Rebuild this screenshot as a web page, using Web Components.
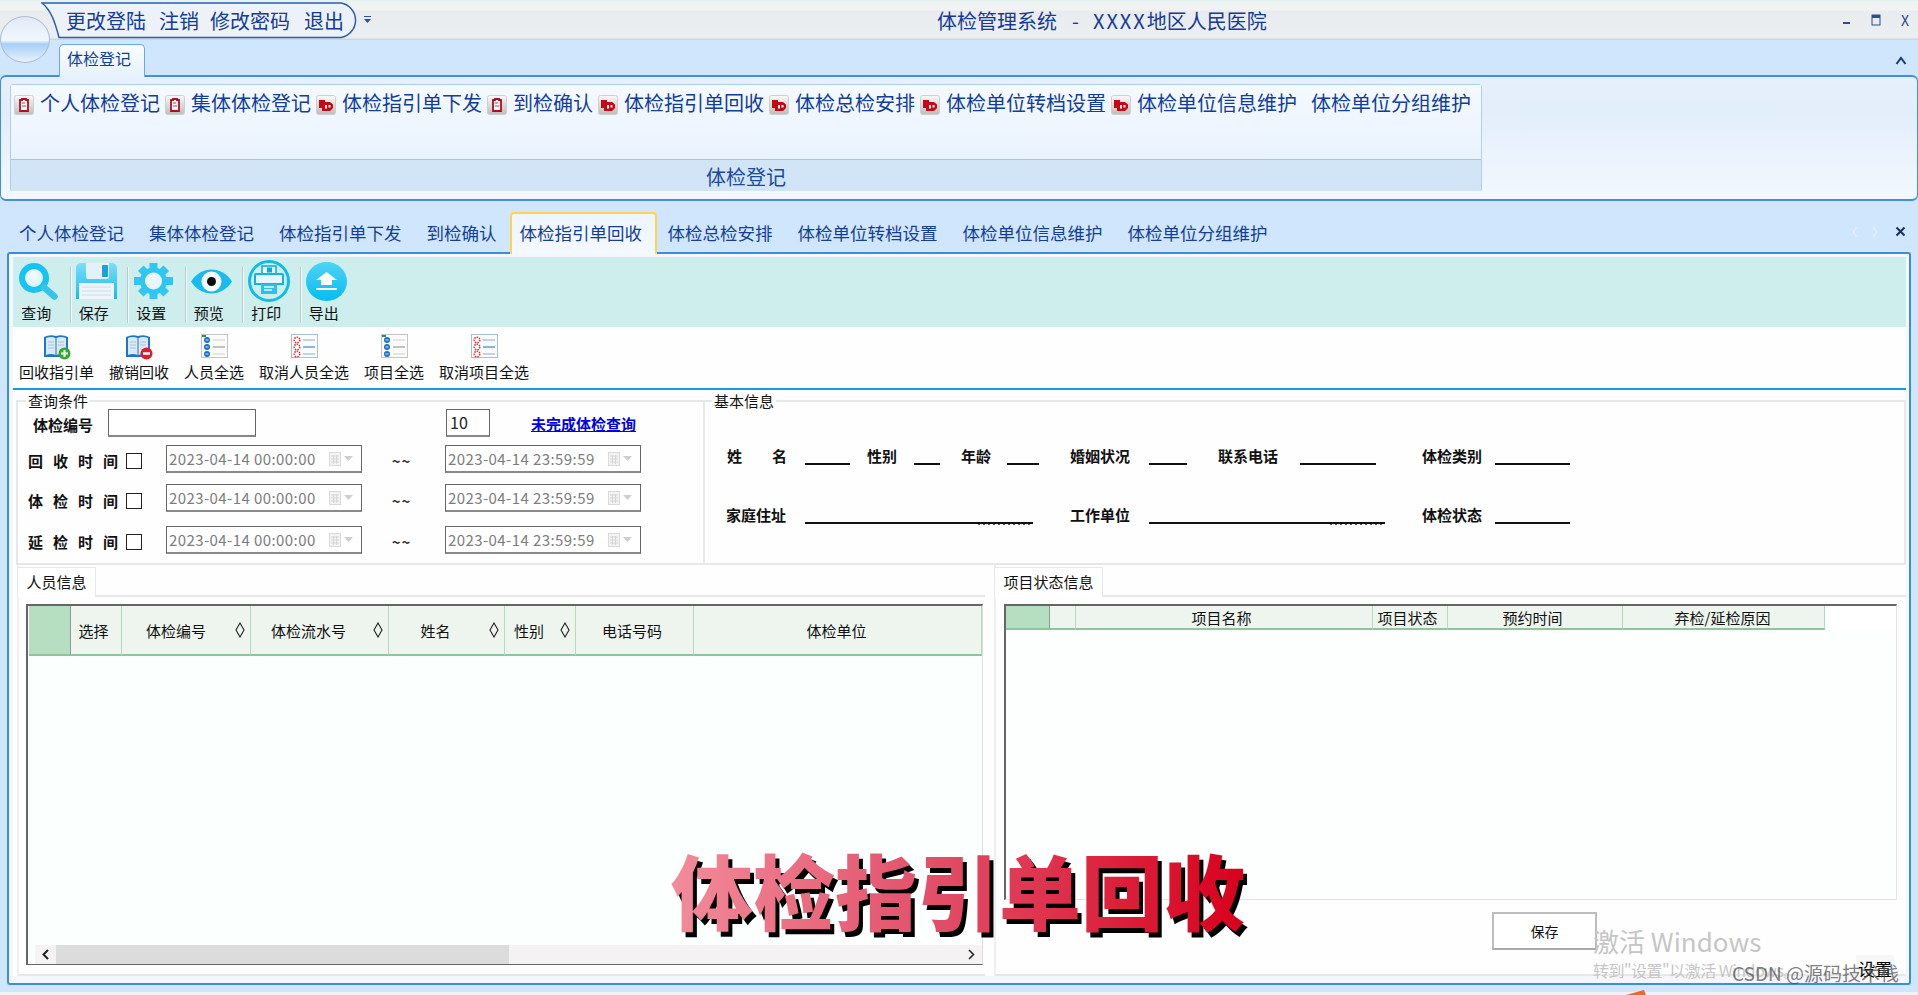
<!DOCTYPE html>
<html lang="zh-CN"><head><meta charset="utf-8"><title>体检管理系统</title>
<style>
html,body{margin:0;padding:0;background:#d0e6fc;overflow:hidden}
body{font-family:"Noto Sans CJK SC","Noto Sans",sans-serif}
</style></head><body>
<hx-app>
  <hx-titlebar></hx-titlebar>
  <hx-tabstrip></hx-tabstrip>
  <hx-ribbon></hx-ribbon>
  <hx-doctabs></hx-doctabs>
  <hx-panel>
    <hx-bigtools></hx-bigtools>
    <hx-smalltools></hx-smalltools>
    <hx-filters>
      <hx-query></hx-query>
      <hx-basic></hx-basic>
    </hx-filters>
    <hx-lower>
      <hx-tabpanel label="人员信息" tabw="79" style="width:968px"><hx-people></hx-people></hx-tabpanel>
      <hx-tabpanel label="项目状态信息" tabw="109" style="width:912px"><hx-items></hx-items></hx-tabpanel>
    </hx-lower>
  </hx-panel>
  <hx-overlay></hx-overlay>
</hx-app>
<script>
const ICONS={
search:`<svg width="40" height="37" viewBox="0 0 40 37"><defs><radialGradient id="a" cx=".45" cy=".4" r=".7"><stop offset="0" stop-color="#f6fcfe"/><stop offset="1" stop-color="#c9edf6"/></radialGradient></defs><circle cx="15" cy="15" r="12" fill="url(#a)" stroke="#17c3f0" stroke-width="6"/><path d="M25 24.500L35.500 33.500" stroke="#35c5ea" stroke-width="6.500" stroke-linecap="round"/></svg>`,
save:`<svg width="41" height="36" viewBox="0 0 41 36"><defs><linearGradient id="a" x2="0" y2="1"><stop offset="0" stop-color="#7fdcf8"/><stop offset="1" stop-color="#12bdf0"/></linearGradient></defs><path d="M5 0H36a5 5 0 0 1 5 5V36H0V5a5 5 0 0 1 5-5Z" fill="url(#a)"/><path d="M10 0H33V14a2 2 0 0 1-2 2H12a2 2 0 0 1-2-2Z" fill="#e4f1fa"/><rect x="26" y="2" width="6" height="12" rx="1" fill="#1f9fd8"/><rect x="3" y="20" width="35" height="16" fill="#eef4fa"/><path d="M6 24H35M6 28H35M6 32H35" stroke="#cbdcea" stroke-width="1.200"/></svg>`,
gear:`<svg width="39" height="36" viewBox="-19.500 -18 39 36"><g fill="#2fc7f2"><circle r="13.500"/><rect x="-4" y="-18" width="8" height="36"/><rect x="-19.500" y="-4" width="39" height="8"/><rect x="-4" y="-18" width="8" height="36" transform="rotate(45)"/><rect x="-4" y="-18" width="8" height="36" transform="rotate(-45)"/></g><circle r="8.500" fill="#eaf6fb"/></svg>`,
eye:`<svg width="41" height="25" viewBox="0 0 41 25"><path d="M0 12.500C10-3.500 31-3.500 41 12.500 31 28.500 10 28.500 0 12.500Z" fill="#19bbee"/><circle cx="20.500" cy="12.500" r="10" fill="#f4fafc"/><circle cx="20.500" cy="12.500" r="4.500" fill="#0c0c0c"/></svg>`,
print:`<svg width="44" height="42" viewBox="0 0 44 42"><circle cx="22" cy="21" r="19.500" fill="none" stroke="#10bce8" stroke-width="3"/><path d="M15 6H29V14H15Z" fill="#e8f6fb" stroke="#12a8d8" stroke-width="1.500"/><rect x="20" y="7.500" width="5" height="5" fill="#12a8d8"/><path d="M9 14H35a1 1 0 0 1 1 1V24H8V15a1 1 0 0 1 1-1Z" fill="#e6f6fb" stroke="#12b4e2" stroke-width="2"/><rect x="14" y="24" width="16" height="10" fill="#2cc0ea"/><path d="M17 30H25M17 27H27" stroke="#e9f8fc" stroke-width="1.300"/></svg>`,
out:`<svg width="41" height="39" viewBox="0 0 41 39"><defs><linearGradient id="a" x2="0" y2="1"><stop offset="0" stop-color="#4fd3f5"/><stop offset="1" stop-color="#05bcf2"/></linearGradient></defs><ellipse cx="20.500" cy="19.500" rx="20.500" ry="19.500" fill="url(#a)"/><path d="M20.500 10L31 18H26V23H15V18H10Z" fill="#fff"/><rect x="10" y="26" width="21" height="2" fill="#fff"/></svg>`,
bookadd:`<svg width="28" height="26" viewBox="0 0 28 26"><path d="M1 3Q7 0 13 2 19 0 25 3V23H1Z" fill="#1c78c6"/><path d="M3 4Q8 2 12.500 4V21Q8 19 3 21ZM13.500 4Q18 2 23 4V21Q18 19 13.500 21Z" fill="#dbe9f5"/><path d="M5 8H11M5 11H11M5 14H11M15 8H21M15 11H21" stroke="#a9c4dc"/><circle cx="21.500" cy="19.500" r="6" fill="#32a92c"/><path d="M18 19.500H25M21.500 16V23" stroke="#fff" stroke-width="2"/></svg>`,
bookdel:`<svg width="28" height="26" viewBox="0 0 28 26"><path d="M1 3Q7 0 13 2 19 0 25 3V23H1Z" fill="#1c78c6"/><path d="M3 4Q8 2 12.500 4V21Q8 19 3 21ZM13.500 4Q18 2 23 4V21Q18 19 13.500 21Z" fill="#dbe9f5"/><path d="M5 8H11M5 11H11M5 14H11M15 8H21M15 11H21" stroke="#a9c4dc"/><circle cx="21.500" cy="19.500" r="6" fill="#d8202c"/><path d="M18 19.500H25" stroke="#fff" stroke-width="2.500"/></svg>`,
checkon:`<svg width="27" height="24" viewBox="0 0 27 24"><rect x=".5" y=".5" width="26" height="23" fill="#fbfbfb" stroke="#c4c4c4"/><path d="M1 1H5V3H1Z" fill="#2a9a3c"/><g fill="#1a70c8"><circle cx="6" cy="6" r="3"/><circle cx="6" cy="13" r="3"/><circle cx="6" cy="20" r="3"/></g><path d="M4.500 6H7.500M4.500 13H7.500M4.500 20H7.500" stroke="#d8ecfa"/><path d="M12 13H24" stroke="#b0b0b0" stroke-width="1.500"/><path d="M12 6H24M12 20H24" stroke="#dedede" stroke-width="1.300"/></svg>`,
checkoff:`<svg width="27" height="24" viewBox="0 0 27 24"><rect x=".5" y=".5" width="26" height="23" fill="#fbfbfb" stroke="#a9bfd6"/><g fill="#fff" stroke="#e0303a" stroke-width="1.500" stroke-dasharray="1.500 1"><circle cx="6" cy="6" r="2.800"/><circle cx="6" cy="13" r="2.800"/><circle cx="6" cy="20" r="2.800"/></g><path d="M12 13H24" stroke="#5f9fd4" stroke-width="1.500"/><path d="M12 6H24M12 20H24" stroke="#a8cbe6" stroke-width="1.300"/></svg>`,
tiledoc:`<svg width="20" height="20" viewBox="0 0 20 20"><defs><linearGradient id="a" x2="0" y2="1"><stop offset="0" stop-color="#fafafa"/><stop offset="1" stop-color="#bdbdbd"/></linearGradient></defs><rect x=".5" y=".5" width="19" height="19" rx="2" fill="url(#a)" stroke="#cfcfcf"/><path d="M6 5H8V4H12V5H14V16H6Z" fill="#fff" stroke="#b50d1c" stroke-width="1.800"/><path d="M8 8H11M8 11H12" stroke="#c8303c" stroke-width="1"/></svg>`,
tilered:`<svg width="20" height="20" viewBox="0 0 20 20"><defs><linearGradient id="a" x2="0" y2="1"><stop offset="0" stop-color="#fafafa"/><stop offset="1" stop-color="#bdbdbd"/></linearGradient></defs><rect x=".5" y=".5" width="19" height="19" rx="2" fill="url(#a)" stroke="#cfcfcf"/><path d="M3 5H9V7H14L17 9.500V13L14 16H6V13H3Z" fill="#c50812"/><rect x="9" y="10" width="2" height="3.500" fill="#fff"/><rect x="12.500" y="10" width="2" height="2.500" fill="#fff"/></svg>`,
cal:`<svg width="26" height="16" viewBox="0 0 26 16"><rect x=".5" y="1.500" width="11" height="13" fill="#f3f3f3" stroke="#dadada"/><path d="M2 5H10M2 8H10M2 11H10M4.500 4V13M7.500 4V13" stroke="#d6d6d6"/><path d="M15 5H24L19.500 10Z" fill="#cfcfcf"/></svg>`,
diamond:`<svg width="10" height="16" viewBox="0 0 10 16"><path d="M5 1L9 8 5 15 1 8Z" fill="none" stroke="#222" stroke-width="1.100"/></svg>`
};
function el(name,css,html,after){
  customElements.define(name,class extends HTMLElement{
    connectedCallback(){
      if(this.shadowRoot)return;
      const s=this.attachShadow({mode:'open'});
      s.innerHTML='<style>'+css+'</style>'+(typeof html==='function'?html(this):html);
      if(after)after(this,s);
    }
  });
}
el('hx-icon',':host{display:block;line-height:0}',t=>ICONS[t.getAttribute('name')]);
el('hx-app',`:host{display:flex;flex-direction:column;position:relative;width:1918px;height:995px;overflow:hidden;
  background:linear-gradient(#d0e6fc 0,#d0e6fc 992px,#e9f4fb 992px);font-family:"Noto Sans CJK SC","Noto Sans",sans-serif}`,'<slot></slot>');

el('hx-titlebar',`:host{display:flex;align-items:center;height:40px;box-sizing:border-box;flex:none;position:relative;
  background:linear-gradient(#dff2ee 0,#f0f3f3 2px,#f1f3f3 10px,#e9ecef 11px,#ecEff2 38px,#ccd5dc 39px)}
 .pill{position:relative;margin-left:41px;width:317px;height:36px;display:flex;align-items:center;gap:14px;padding-left:25px;box-sizing:border-box;font-size:20px;color:#123d98;white-space:nowrap}
 .pill svg{position:absolute;left:0;top:0}
 .pill span{position:relative}
 .dd{margin-left:6px;line-height:0}
 .title{margin-left:566px;font-size:20px;color:#173b92;white-space:nowrap;width:333px;padding-top:1px;display:flex}
 .title i{font-style:normal;margin:0 14px 0 15px}
 .title b{font-weight:400;letter-spacing:2px}
 .ctl{margin-left:auto;display:flex;gap:3px;color:#274a86}
 .ctl span{display:flex;width:26px;height:26px;align-items:center;justify-content:center;font-size:14px}
 .orb{position:absolute;left:0;top:16px;width:50px;height:47px;border-radius:50%;z-index:5;box-sizing:border-box;border:1.500px solid #aebdd0;
  background:linear-gradient(#dfe9f7 0,#eef4fb 40%,#f0f6fc 52%,#a6cff7 60%,#c6e0fa 80%,#e8f2fb 100%)}`,
 `<div class="orb"></div><div class="pill"><svg width="320" height="37" viewBox="0 0 320 37"><path d="M1 1H300A17.500 17.500 0 0 1 300 35.500H18C14 20 10 8 1 1Z" fill="#edf2f9" stroke="#2a5cb4" stroke-width="1.500"/></svg><span>更改登陆</span><span style="margin-left:-1px">注销</span><span style="margin-left:-3px">修改密码</span><span>退出</span></div>
 <div class="dd"><svg width="7" height="8"><path d="M0 .5H7" stroke="#2a4fa0"/><path d="M0 3H7L3.500 7Z" fill="#2a4fa0"/></svg></div>
 <div class="title"><span>体检管理系统</span><i>-</i><b>XXXX</b><span>地区人民医院</span></div>
 <div class="ctl"><span><svg width="10" height="10"><rect x="1" y="7" width="7" height="2" fill="#2c4f8a"/></svg></span><span><svg width="10" height="12"><rect x="1" y="1" width="8" height="10" fill="#e8edf2" stroke="#2c4f8a"/><rect x="1" y="1" width="8" height="3" fill="#2c4f8a"/></svg></span><span>X</span></div>`);

el('hx-tabstrip',`:host{display:flex;align-items:flex-end;height:35px;flex:none;position:relative;z-index:2}
 .t{margin-left:59px;margin-bottom:-2px;width:86px;height:33px;box-sizing:border-box;padding:0 6px 7px 0;border:1px solid #6aa8e6;border-bottom:0;border-radius:5px 5px 0 0;
  background:linear-gradient(#fbfdff,#e6f1fd);font-size:16px;color:#123d98;display:flex;align-items:center;justify-content:center}
 .c{margin-left:auto;margin-right:11px;align-self:center;line-height:0;margin-top:5px}`,
 `<div class="t">体检登记</div><div class="c"><svg width="12" height="9"><path d="M1.500 8L6 2 10.500 8" fill="none" stroke="#173c78" stroke-width="2"/></svg></div>`);

const ribbonItems=[['个人体检登记','tiledoc'],['集体体检登记','tiledoc'],['体检指引单下发','tilered'],['到检确认','tiledoc'],['体检指引单回收','tilered'],['体检总检安排','tilered'],['体检单位转档设置','tilered'],['体检单位信息维护','tilered'],['体检单位分组维护','']];
el('hx-ribbon',`:host{display:block;height:126px;box-sizing:border-box;flex:none;border:solid #3f90dd;border-width:2px 1px;border-radius:6px;
  background:linear-gradient(#e6f0fb,#e3eefb 30%,#f3f8fe)}
 .g{margin:7px 0 0 9px;width:1472px;height:108px;box-sizing:border-box;border:1px solid #a9d1f2;border-radius:3px;display:flex;flex-direction:column}
 .items{height:74px;flex:none;box-sizing:border-box;padding:10px 0 0 3px;display:flex;align-items:flex-start;gap:5px;background:linear-gradient(#f5f9ff,#e9f3ff);font-size:20px;line-height:20px;color:#123d98;white-space:nowrap}
 .i{display:flex;gap:6px}
 .i span{margin-top:-2px}
 .i.n{margin-left:9px}
 .cap{flex:1;padding-top:2px;border-top:1px solid #9bc8ef;border-bottom:2px solid #f3f9ff;background:#d2e5f7;font-size:20px;color:#1c4a9c;display:flex;align-items:center;justify-content:center}`,
 `<div class="g"><div class="items">${ribbonItems.map(([t,ic])=>`<div class="i${ic?'':' n'}">${ic?`<hx-icon name="${ic}"></hx-icon>`:''}<span>${t}</span></div>`).join('')}</div><div class="cap">体检登记</div></div>`);

const docTabs=['个人体检登记','集体体检登记','体检指引单下发','到检确认','体检指引单回收','体检总检安排','体检单位转档设置','体检单位信息维护','体检单位分组维护'];
el('hx-doctabs',`:host{display:flex;align-items:flex-start;height:53px;flex:none;padding:11px 0 0 8px;box-sizing:border-box;position:relative;z-index:2;margin-bottom:-2px;font-size:17.500px;color:#143f95;white-space:nowrap}
 .t{height:42px;box-sizing:border-box;padding:0 9px 3px;border:2px solid transparent;border-bottom:0;margin-right:3px;display:flex;align-items:center}
 .t.a{border-color:#ffd44d;border-radius:4px 4px 0 0;background:linear-gradient(#eef5ff,#f4f8ff);padding:0 12.500px 3px 8px;margin-left:-1px;margin-right:0}
 .r{margin-left:auto;display:flex;align-items:center;gap:14px;height:39px;padding-right:12px}`,
 `${docTabs.map((t,i)=>`<div class="t${i==4?' a':''}">${t}</div>`).join('')}
 <div class="r"><svg width="7" height="12"><path d="M6 1L2 6 6 11" fill="none" stroke="#e4eefa" stroke-width="1.500"/></svg><svg width="7" height="12"><path d="M1 1L5 6 1 11" fill="none" stroke="#e4eefa" stroke-width="1.500"/></svg><svg width="11" height="11" style="margin-left:2px"><path d="M1.500 1.500L9.500 9.500M9.500 1.500L1.500 9.500" stroke="#1c2f58" stroke-width="2"/></svg></div>`);

el('hx-panel',`:host{display:flex;flex-direction:column;width:1904px;height:733px;box-sizing:border-box;flex:none;margin-left:7px;border:2px solid #3c8edb;border-radius:3px;
  padding:3px 3px 7px 4px;background:#f3f7ff}
 .in{display:flex;flex-direction:column;flex:1;background:#fefefe;min-height:0}`,'<div class="in"><slot></slot></div>');

const big=[['查询','search'],['保存','save'],['设置','gear'],['预览','eye'],['打印','print'],['导出','out']];
el('hx-bigtools',`:host{display:flex;height:70px;flex:none;background:#cdeeec;font-size:15px;color:#111}
 .b{width:56.500px;box-sizing:border-box;display:flex;flex-direction:column;align-items:center;padding-right:5px}
 .b:first-child{width:54px}
 .ic{height:48px;display:flex;align-items:center;justify-content:center;width:46px}
 .l{line-height:22px;margin:-3px 5px 0 0}
 .s{width:1px;margin:10px 0 4px;background:#bccaca;box-shadow:1px 0 0 #eef9f8;flex:none}`,
 big.map(([t,i],n)=>`<div class="b"><div class="ic"><hx-icon name="${i}"></hx-icon></div><div class="l">${t}</div></div>${n<5?'<div class="s"></div>':''}`).join(''));

const small=[['回收指引单','bookadd'],['撤销回收','bookdel'],['人员全选','checkon'],['取消人员全选','checkoff'],['项目全选','checkon'],['取消项目全选','checkoff']];
el('hx-smalltools',`:host{display:flex;gap:15px;height:63px;box-sizing:border-box;flex:none;padding:7px 0 0 6px;border-bottom:2px solid #169ae8;font-size:15px;color:#111;white-space:nowrap}
 .b{display:flex;flex-direction:column;align-items:center}
 .ic{height:26px}
 .l{line-height:28px;margin-top:-2px}`,
 small.map(([t,i])=>`<div class="b"><div class="ic"><hx-icon name="${i}"></hx-icon></div><div class="l">${t}</div></div>`).join(''));

el('hx-filters',':host{display:flex;flex:none;height:175px;padding:3px 0 0 3px;box-sizing:border-box}','<slot></slot>');

const fsCss=`fieldset{margin:0;padding:0;box-sizing:border-box;height:172px;border:2px solid #e8e8e8;min-width:0}
 legend{padding:0 2px;height:16px;line-height:16px;font-size:15px;color:#111}`;
function dateBox(v){return `<div class="d"><span>${v}</span><hx-icon name="cal"></hx-icon></div>`}
function dateRow(l,s,mt){return `<div class="r" style="margin-top:${mt}px"><div class="l" style="margin-top:${s}px">${l}</div><div class="c" style="margin-top:${s+1}px"></div>${dateBox('2023-04-14 00:00:00')}<div class="w" style="margin-top:${s}px">~~</div>${dateBox('2023-04-14 23:59:59')}</div>`}
el('hx-query',`:host{display:block;width:687px;flex:none}
 ${fsCss} fieldset{border-right:0} legend{margin-left:8px}
 .top{display:flex;align-items:center;height:28px;padding-left:15px}
 .b{font-weight:700;font-size:15px;width:75px;color:#111;padding-top:3px}
 .inp{height:28px;box-sizing:border-box;background:#fff;border:1px solid #666;border-bottom:2px solid #888;font-size:16px;padding-left:3px;line-height:24px;color:#222}
 a{margin-left:41px;font-size:15px;font-weight:700;color:#0000e6;text-decoration:underline}
 .r{display:flex;align-items:center;padding-left:10px;height:28px}
 .l{width:90px;font-weight:700;font-size:15px;letter-spacing:10px;white-space:nowrap;color:#111}
 .c{width:16px;height:16px;box-sizing:border-box;border:1.500px solid #222;margin-left:8px;background:#fff;flex:none}
 .d{margin-left:24px;width:196px;height:28px;box-sizing:border-box;display:flex;align-items:center;justify-content:space-between;padding:0 6px 0 2px;border:1px solid #666;border-bottom:2px solid #8a8a8a;color:#7d7d7d;font-size:15px;letter-spacing:.42px;background:#fff;white-space:nowrap}
 .w{width:83px;text-align:center;margin-left:-2px;margin-right:-22px;font-size:15px;letter-spacing:1px;font-weight:700;color:#333}`,
 `<fieldset><legend>查询条件</legend>
 <div class="top"><div class="b">体检编号</div><div class="inp" style="width:148px"></div><div class="inp" style="width:44px;margin-left:190px">10</div><a href="#">未完成体检查询</a></div>
 ${dateRow('回收时间',2,8)}${dateRow('体检时间',4,11)}${dateRow('延检时间',2,14)}
 </fieldset>`);

function rowHtml(base,items){let cur=base,h='';for(const [l,lx,ux,ue,sp,dot] of items){h+=`<span class="l" style="margin-left:${lx-cur}px;width:${ux-lx}px${sp?';letter-spacing:30px':''}">${l}</span><span class="u${dot?' dot':''}" style="width:${ue-ux}px"></span>`;cur=ue;}return h}
el('hx-basic',`:host{display:block;width:1203px;flex:none}
 ${fsCss} legend{margin-left:7px}
 .row{display:flex;height:19px;align-items:flex-end}
 .l{font-weight:700;font-size:15px;line-height:19px;color:#111;white-space:nowrap;flex:none}
 .u{height:2px;background:#111;flex:none}
 .u.dot{height:3px;margin-bottom:-1px;background:repeating-linear-gradient(90deg,#555 0 2px,transparent 2px 5px) right bottom/55px 1px no-repeat,linear-gradient(#111,#111) top/100% 2px no-repeat}`,
 `<fieldset><legend>基本信息</legend>
 <div class="row" style="margin-top:37px">${rowHtml(705,[['姓名',727,805,850,1],['性别',867,914,940],['年龄',961,1007,1039],['婚姻状况',1070,1149,1187],['联系电话',1218,1300,1376],['体检类别',1422,1495,1570]])}</div>
 <div class="row" style="margin-top:40px">${rowHtml(705,[['家庭住址',726,805,1033,0,1],['工作单位',1070,1149,1385,0,1],['体检状态',1422,1495,1570]])}</div>
 </fieldset>`);

el('hx-lower',`:host{display:flex;flex:1;gap:9px;padding-left:4px;min-height:0}`,'<slot></slot>');
el('hx-tabpanel',`:host{display:flex;flex-direction:column;box-sizing:border-box;flex:none;padding-top:2px;border-bottom:2px solid #e8e8e8;border-left:2px solid #efefef}
 .h{display:flex;height:30px;flex:none;margin-left:-2px}
 .t{box-sizing:border-box;border:1px solid #e8e8e8;border-bottom:0;background:#fff;font-size:15px;color:#111;display:flex;align-items:center;justify-content:center;white-space:nowrap;padding-bottom:2px}
 .f{flex:1;border-bottom:2px solid #e8e8e8}
 .b{flex:1;display:flex;flex-direction:column;min-height:0}`,
 t=>`<div class="h"><div class="t" style="width:${t.getAttribute('tabw')}px">${t.getAttribute('label')}</div><div class="f"></div></div><div class="b"><slot></slot></div>`);

const pc=[[42,'',0,1,0],[51,'选择',0,0,5],[129,'体检编号',1,0,20],[138,'体检流水号',1,0,22],[116,'姓名',1,0,22],[71,'性别',1,0,22],[118,'电话号码',0,0,5],[288,'体检单位',0,0,2]];
const hdrCss=`.hd{display:flex;flex:none;background:#fff;font-size:15px;color:#111}
 .c{box-sizing:border-box;flex:none;background:#eef5ef;border-right:1px solid #b4d8c0;border-bottom:2px solid #8fc49f;display:flex;align-items:center;justify-content:center;position:relative;white-space:nowrap}
 .c.g{background:#b5dfc0;border-right:1px solid #909a92}
 .c hx-icon{position:absolute;right:5px;top:50%;margin-top:-8px}`;
el('hx-people',`:host{display:flex;flex-direction:column;height:361px;margin:7px 0 0 7px;width:957px;box-sizing:border-box;border:solid #666;border-width:2px 1px 1px 2px;border-right-color:#ddd;background:#fbfffd}
 ${hdrCss} .hd{height:50px;padding-left:1px;padding-top:0}
 .sp{flex:1}
 .sb{display:flex;height:19px;flex:none;margin-left:7px;background:#f4f2f2;align-items:center}
 .a{width:21px;display:flex;justify-content:center;flex:none}
 .th{width:453px;height:19px;background:#dcdcdc}
 .sp2{flex:1}`,
 `<div class="hd">${pc.map(([w,t,s,g,p])=>`<div class="c${g?' g':''}" style="width:${w}px;padding-right:${p}px">${t}${s?'<hx-icon name="diamond"></hx-icon>':''}</div>`).join('')}</div>
 <div class="sp"></div><div class="sb"><div class="a"><svg width="9" height="11"><path d="M7 1L2.500 5.500 7 10" fill="none" stroke="#222" stroke-width="2"/></svg></div><div class="th"></div><div class="sp2"></div><div class="a"><svg width="9" height="11"><path d="M2 1L6.500 5.500 2 10" fill="none" stroke="#222" stroke-width="1.500"/></svg></div></div>`);

const ic=[[44,'',1,0],[26,'',0,0],[297,'项目名称',0,5],[75,'项目状态',0,5],[175,'预约时间',0,5],[202,'弃检/延检原因',0,2]];
el('hx-items',`:host{display:flex;flex-direction:column;flex:1}
 ${hdrCss}
 .grid{margin:7px 0 0 8px;width:893px;height:296px;box-sizing:border-box;border:solid #666;border-width:2px 1px 1px 2px;border-right-color:#e4e4e4;border-bottom-color:#e4e4e4;background:#fcfffd;flex:none}
 .hd{height:24px}
 .btn{margin:12px 0 0 496px;width:105px;height:38px;box-sizing:border-box;border:2px solid #bdbdbd;border-bottom-color:#aaa;background:#fff;font-size:14px;color:#111;display:flex;align-items:center;justify-content:center}`,
 `<div class="grid"><div class="hd">${ic.map(([w,t,g,p])=>`<div class="c${g?' g':''}" style="width:${w}px;padding-right:${p}px">${t}</div>`).join('')}</div></div><div class="btn">保存</div>`);

el('hx-overlay',`:host{display:block;position:absolute;inset:0;pointer-events:none;z-index:10}
 .big{position:absolute;left:671px;top:841px;font-size:82px;line-height:96px;font-weight:900;white-space:nowrap;
  background:linear-gradient(90deg,#f28c9b,#e2506a 45%,#d8001c);-webkit-background-clip:text;background-clip:text;color:transparent;filter:drop-shadow(4px 5px 0 #000)}
 .w1{position:absolute;left:1593px;top:924px;font-size:26px;line-height:34px;color:#c6c6c6;white-space:nowrap}
 .w2{position:absolute;left:1593px;top:958px;font-size:16px;line-height:24px;color:#c6c6c6;white-space:nowrap;letter-spacing:-.5px}
 .cs{position:absolute;left:1732px;top:961px;font-size:19px;line-height:24px;color:rgba(70,70,70,.7);white-space:nowrap}
 .st{position:absolute;left:1856px;top:955px;width:38px;height:27px;background:#f7f7f7;font-size:17px;line-height:27px;color:#000;text-align:center;white-space:nowrap}
 svg{position:absolute;left:1626px;top:990px}`,
 `<div class="big">体检指引单回收</div><div class="w1">激活 Windows</div><div class="w2">转到"设置"以激活 Windows。</div><div class="st">设置</div><div class="cs">CSDN @源码技术栈</div><svg width="20" height="5"><path d="M0 5L18 0 20 5Z" fill="#f0671e"/></svg>`);
</script>
</body></html>
